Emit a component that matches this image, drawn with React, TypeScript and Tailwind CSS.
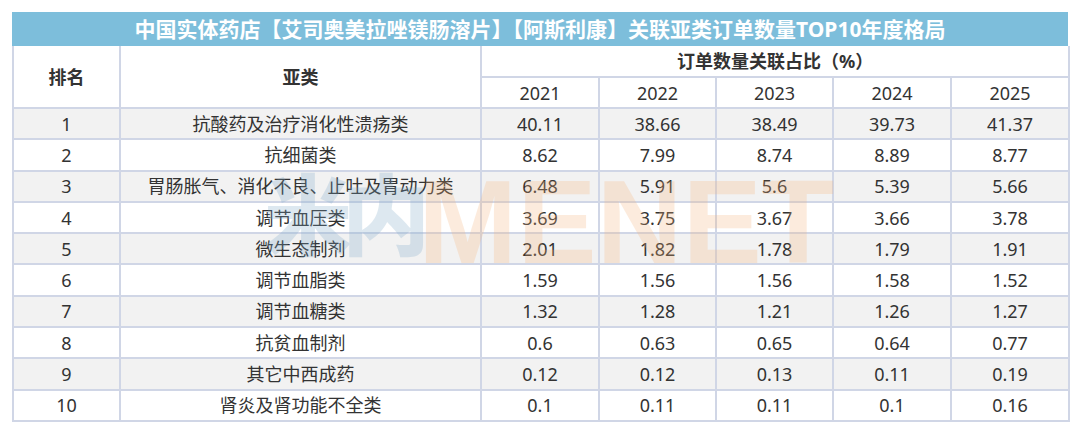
const years = ["2021", "2022", "2023", "2024", "2025"];

const rows = [
  { rank: 1, name: "抗酸药及治疗消化性溃疡类", values: ["40.11", "38.66", "38.49", "39.73", "41.37"] },
  { rank: 2, name: "抗细菌类", values: ["8.62", "7.99", "8.74", "8.89", "8.77"] },
  { rank: 3, name: "胃肠胀气、消化不良、止吐及胃动力类", values: ["6.48", "5.91", "5.6", "5.39", "5.66"] },
  { rank: 4, name: "调节血压类", values: ["3.69", "3.75", "3.67", "3.66", "3.78"] },
  { rank: 5, name: "微生态制剂", values: ["2.01", "1.82", "1.78", "1.79", "1.91"] },
  { rank: 6, name: "调节血脂类", values: ["1.59", "1.56", "1.56", "1.58", "1.52"] },
  { rank: 7, name: "调节血糖类", values: ["1.32", "1.28", "1.21", "1.26", "1.27"] },
  { rank: 8, name: "抗贫血制剂", values: ["0.6", "0.63", "0.65", "0.64", "0.77"] },
  { rank: 9, name: "其它中西成药", values: ["0.12", "0.12", "0.13", "0.11", "0.19"] },
  { rank: 10, name: "肾炎及肾功能不全类", values: ["0.1", "0.11", "0.11", "0.1", "0.16"] },
];

const cell = "border-2 border-[#d0d6e6] text-center align-middle p-0";

export default function App() {
  return (
    <div className="relative w-[1080px] h-[434px] bg-white p-3 text-[#333] font-['Noto_Sans','Noto_Sans_CJK_SC',sans-serif]">
      <div className="w-[1056px]">
        <div className="h-[34px] bg-[#7dbedb] text-white font-bold text-[21px] flex items-center justify-center leading-none">
          中国实体药店【艾司奥美拉唑镁肠溶片】【阿斯利康】关联亚类订单数量TOP10年度格局
        </div>
        <table className="w-full table-fixed border-collapse text-[18px] leading-none">
          <colgroup>
            <col className="w-[107px]" />
            <col className="w-[361px]" />
            <col className="w-[118px]" />
            <col className="w-[117px]" />
            <col className="w-[117px]" />
            <col className="w-[118px]" />
            <col className="w-[118px]" />
          </colgroup>
          <thead>
            <tr className="h-[31px]">
              <th rowSpan={2} className={`${cell} border-t-0 font-bold`}>排名</th>
              <th rowSpan={2} className={`${cell} border-t-0 font-bold`}>亚类</th>
              <th colSpan={5} className={`${cell} border-t-0 font-bold`}>订单数量关联占比（%）</th>
            </tr>
            <tr className="h-[31px]">
              {years.map((y) => (
                <th key={y} className={`${cell} font-normal`}>{y}</th>
              ))}
            </tr>
          </thead>
          <tbody>
            {rows.map((r, i) => (
              <tr key={r.rank} className={`h-[31.3px] ${i % 2 === 0 ? "bg-[#f2f2f2]" : "bg-white"}`}>
                <td className={cell}>{r.rank}</td>
                <td className={cell}>{r.name}</td>
                {r.values.map((v, j) => (
                  <td key={j} className={cell}>{v}</td>
                ))}
              </tr>
            ))}
          </tbody>
        </table>
      </div>

      {/* watermark */}
      <span className="pointer-events-none select-none absolute left-[264px] top-[166px] text-[88px] font-black leading-none text-[#7aa7c7] opacity-25 font-['Noto_Sans_CJK_SC',sans-serif] tracking-[-10px]">
        米内
      </span>
      <span className="pointer-events-none select-none absolute left-[418px] top-[162px] text-[119px] font-bold leading-none text-[#f7b47a] opacity-25 font-['Liberation_Sans',sans-serif]">
        MENET
      </span>
    </div>
  );
}
